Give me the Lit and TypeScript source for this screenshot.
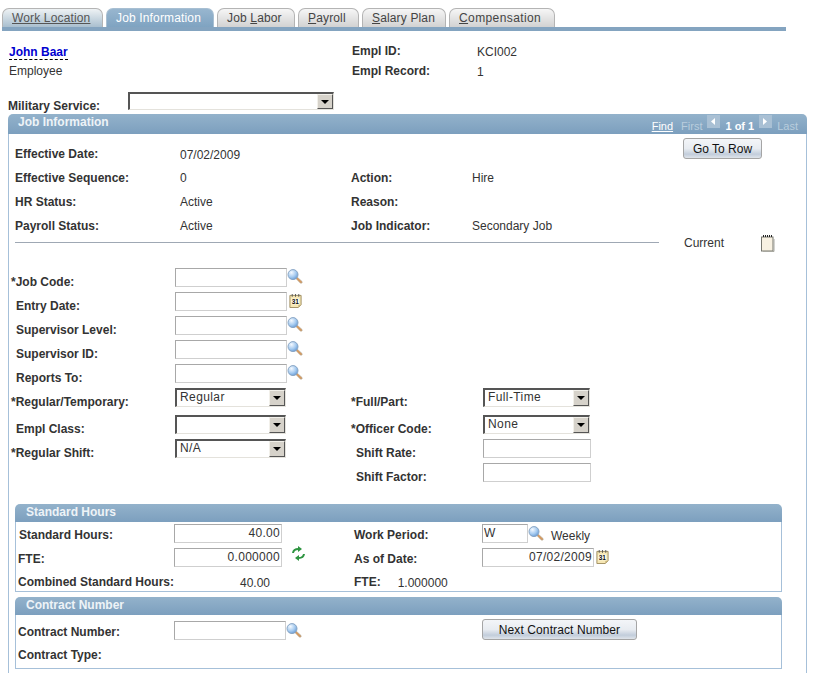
import { LitElement, css, html, svg } from 'lit';
import { customElement } from 'lit/decorators.js';

const lookupIcon = html`<svg class="ico look" width="16" height="16" viewBox="0 0 16 16">
  <defs><radialGradient id="lens" cx="0.35" cy="0.3" r="0.8"><stop offset="0" stop-color="#f4f9ff"/><stop offset="0.55" stop-color="#a6cbf0"/><stop offset="1" stop-color="#5c92d0"/></radialGradient></defs>
  <path d="M8.600 9.200 L10 7.900 L15 12.400 Q15.600 13.200 14.800 14 Q14 14.600 13.200 13.900 Z" fill="#d9985a" stroke="#a9a9a0" stroke-width=".6"/>
  <circle cx="6" cy="5.600" r="5" fill="url(#lens)" stroke="#8aa6c4" stroke-width="1"/>
</svg>`;

const calendarIcon = html`<svg class="ico" width="13" height="14" viewBox="0 0 13 15">
  <path d="M.5 1.500H12.500V11.500L9.500 14.500H.5Z" fill="#f6e7b4" stroke="#9c8a5c"/>
  <path d="M12.500 11.500L9.500 14.500V11.500Z" fill="#c9b47c"/>
  <path d="M3 0V3M6.500 0V3M10 0V3" stroke="#555" stroke-width="1"/>
  <rect x="2" y="5" width="8.500" height="6" fill="#fffdf0"/>
  <text x="6.300" y="10.800" text-anchor="middle" font-size="7" font-weight="700" font-family="Liberation Sans, sans-serif" fill="#111">31</text>
</svg>`;

const noteIcon = html`<svg width="14" height="17" viewBox="0 0 14 17">
  <rect x=".5" y="2" width="11.500" height="14" fill="#f8f1e2" stroke="#77776f"/>
  <path d="M13 4V16.500H2" fill="none" stroke="#a8a8a0"/>
  <path d="M2 1H11" stroke="#222" stroke-width="2" stroke-dasharray="1 1"/>
</svg>`;

const refreshIcon = html`<svg width="15" height="15" viewBox="0 0 15 15" fill="none" stroke="#2d9440" stroke-width="2">
  <path d="M2 7Q2.500 3 7.500 3"/><path d="M7 0L11 3L7 6Z" fill="#2d9440" stroke="none"/>
  <path d="M13 8Q12.500 12 7.500 12"/><path d="M8 15L4 12L8 9Z" fill="#2d9440" stroke="none"/>
</svg>`;

const arrowLeft = svg`<path d="M8 3V10L4 6.500Z" fill="#fff"/>`;
const arrowRight = svg`<path d="M4 3V10L8 6.500Z" fill="#fff"/>`;

const tabs = [
  { pre: '', key: '', post: 'Work Location', cls: 'visited', width: 101 },
  { pre: '', key: '', post: 'Job Information', cls: 'active', width: 108 },
  { pre: 'Job ', key: 'L', post: 'abor', cls: '', width: 78 },
  { pre: '', key: 'P', post: 'ayroll', cls: '', width: 61 },
  { pre: '', key: 'S', post: 'alary Plan', cls: '', width: 84 },
  { pre: '', key: 'C', post: 'ompensation', cls: 'comp', width: 106 },
];

@customElement('app-root')
export class AppRoot extends LitElement {
  static styles = css`
    :host {
      display: block;
      width: 826px;
      height: 673px;
      overflow: hidden;
      background: #fff;
      color: #333;
      font: 12px/14px 'Liberation Sans', Arial, sans-serif;
    }
    * { box-sizing: border-box; }

    .tabs {
      display: flex;
      gap: 3px;
      width: 784px;
      height: 23px;
      margin: 8px 0 0 2px;
      border-bottom: 4px solid #84a4c0;
    }
    .tab {
      height: 19px;
      padding: 2px 0 0 9px;
      border: 1px solid #b4b4b4;
      border-bottom: 0;
      border-radius: 7px 7px 0 0;
      background: linear-gradient(#f6f6f6, #d2d2d2);
      color: #444;
      letter-spacing: 0.15px;
      white-space: nowrap;
    }
    .tab u { text-decoration: underline; }
    .tab.visited {
      background: linear-gradient(#eef2f4, #a9bfcf);
      color: #555;
      text-decoration: underline;
    }
    .tab.active {
      border-color: #a8bfd2;
      background: linear-gradient(#98b6cf, #7fa3c1);
      color: #fff;
    }
    .tab.comp { letter-spacing: 0.4px; }

    .who {
      display: grid;
      grid-template-columns: 343px 125px 1fr;
      grid-auto-rows: 20px;
      margin: 11px 0 0 9px;
      align-items: center;
    }
    .who .name {
      justify-self: start;
      color: #0000d0;
      font-weight: 700;
      border-bottom: 1px dashed #000;
    }
    .who b, .who .emp { padding-bottom: 2px; }
    .military { display: flex; height: 22px; margin: 10px 0 0 8px; }
    .military b { width: 120px; padding-top: 7px; }

    b { font-weight: 700; color: #333; white-space: nowrap; }

    .panel { width: 799px; margin-left: 8px; }
    .panel-head {
      display: flex;
      align-items: center;
      justify-content: space-between;
      height: 20px;
      padding: 0 9px 0 10px;
      border-radius: 5px 5px 0 0;
      background: linear-gradient(#93b2cb, #7c9fbe);
      color: #fff;
      font-weight: 700;
    }
    .panel-head .title { margin-top: -4px; color: #eef3f7; }
    .nav {
      display: flex;
      align-items: center;
      gap: 5px;
      padding-top: 4px;
      font-size: 11px;
      font-weight: 400;
      color: #b9cddd;
    }
    .nav .find { color: #fff; text-decoration: underline; margin-right: 3px; }
    .nav .count { color: #fff; font-weight: 700; }
    .nav svg { display: block; align-self: flex-start; margin-top: -4px; }
    .panel-body {
      position: relative;
      height: 540px;
      padding-top: 8px;
      border: 1px solid #a6c0d9;
      border-width: 0 1px;
    }

    .info {
      display: grid;
      grid-template-columns: 165px 171px 121px 1fr;
      height: 24px;
      padding-left: 6px;
      align-items: center;
    }
    .lower { padding-top: 2px; }
    .goto { position: absolute; top: 4px; left: 674px; }
    .btn {
      display: block;
      height: 21px;
      padding: 0;
      border: 1px solid #a5a5a5;
      border-radius: 3px;
      background: linear-gradient(#f3f5f8 0%, #e8ecf1 50%, #c2cddb 80%, #dfe4ea 100%);
      color: #111;
      font: 12px 'Liberation Sans', Arial, sans-serif;
      text-align: center;
    }
    .btn.go { width: 79px; }
    .btn.next { width: 155px; margin-top: -2px; letter-spacing: 0.1px; }

    .rule-row { display: flex; height: 18px; padding-left: 6px; }
    .rule { width: 644px; height: 1px; margin-top: 4px; background: #9fa8b4; }
    .current { margin: -2px 0 0 25px; width: 77px; }
    .rule-row svg { flex: none; margin-top: -3px; }

    .form { margin-top: 12px; }
    .row {
      display: grid;
      grid-template-columns: 164px 176px 132px 1fr;
      height: 24px;
      padding-left: 2px;
    }
    .row.tall { height: 27px; }
    .row b { padding-top: 7px; }
    .in1 { padding-left: 5px; }
    .cell { display: flex; align-items: flex-start; }

    input {
      display: block;
      height: 19px;
      padding: 0 1px 1px;
      border: 1px solid;
      border-color: #a8a8a8 #cfcfcf #cfcfcf #a8a8a8;
      background: #fff;
      color: #333;
      font: 12px 'Liberation Sans', Arial, sans-serif;
      letter-spacing: 0.3px;
      outline: 0;
    }
    input.r { text-align: right; }
    .w112 { width: 112px; }
    .w108 { width: 108px; }
    .w46 { width: 46px; }
    .ico { display: block; flex: none; }
    .look { margin-top: 1px; }
    .cal { margin: 2px 0 0 2px; }
    .cal2 { margin: 2px 0 0 2px; }

    .sel {
      display: flex;
      justify-content: space-between;
      width: 111px;
      height: 19px;
      padding-left: 3px;
      border: solid;
      border-width: 2px 1px 1px 2px;
      border-color: #555 #e4e2dc #e4e2dc #555;
      background: #fff;
      color: #333;
      letter-spacing: 0.4px;
      line-height: 15px;
    }
    .sel.wide { width: 206px; height: 18px; }
    .sel.mid { width: 107px; }
    .sel i {
      display: flex;
      align-items: center;
      justify-content: center;
      width: 16px;
      height: 16px;
      border: 1px solid;
      border-color: #f2f0ea #555 #555 #f2f0ea;
      background: #d6d2ca;
    }
    .sel.wide i { height: 15px; }
    .sel i::after {
      content: '';
      border: 4px solid transparent;
      border-top: 4px solid #000;
      border-bottom: 0;
    }

    .sub { width: 767px; margin-left: 6px; }
    .sub-head {
      height: 18px;
      padding: 1px 0 0 11px;
      border-radius: 5px 5px 0 0;
      background: linear-gradient(#93b2cb, #7c9fbe);
      color: #eef3f7;
      font-weight: 700;
    }
    .sub-body { border: 1px solid #a6c0d9; border-top: 0; }
    .s1 { margin-top: 17px; }
    .s1 .sub-body { height: 70px; padding-top: 2px; }
    .s2 { margin-top: 5px; }
    .s2 .sub-body { height: 54px; padding-top: 6px; }
    .srow {
      display: grid;
      grid-template-columns: 156px 180px 128px 1fr;
      height: 24px;
      padding-left: 2px;
    }
    .srow b { padding-top: 4px; }
    .srow .look { margin-top: 2px; }
    .srow.plain { align-items: start; }
    .srow.plain b { padding-top: 3px; }
    .srow.plain span { padding-top: 4px; }
    .hours { padding-left: 1px; }
    .weekly { margin: 5px 0 0 7px; }
    .spin { margin: -2px 0 0 9px; }
    .val40 { padding-left: 66px; }
    .fte { display: flex; gap: 17px; }
  `;

  protected render() {
    return html`
      <div class="tabs">
        ${tabs.map(
          (t) => html`<div class="tab ${t.cls}" style="width:${t.width}px">${t.pre}${t.key ? html`<u>${t.key}</u>` : ''}${t.post}</div>`
        )}
      </div>

      <div class="who">
        <span class="name">John Baar</span><b>Empl ID:</b><span>KCI002</span>
        <span class="emp">Employee</span><b>Empl Record:</b><span>1</span>
      </div>

      <div class="military">
        <b>Military Service:</b>
        <div class="sel wide"><span></span><i></i></div>
      </div>

      <div class="panel">
        <div class="panel-head">
          <span class="title">Job Information</span>
          <span class="nav">
            <span class="find">Find</span><span>First</span>
            <svg width="13" height="13" viewBox="0 0 13 13"><rect width="13" height="13" fill="#a9c0d4"/>${arrowLeft}</svg>
            <span class="count">1 of 1</span>
            <svg width="13" height="13" viewBox="0 0 13 13"><rect width="13" height="13" fill="#a9c0d4"/>${arrowRight}</svg>
            <span>Last</span>
          </span>
        </div>
        <div class="panel-body">
          <div class="goto"><button class="btn go">Go To Row</button></div>
          <div class="info"><b>Effective Date:</b><span class="lower">07/02/2009</span></div>
          <div class="info"><b>Effective Sequence:</b><span>0</span><b>Action:</b><span>Hire</span></div>
          <div class="info"><b>HR Status:</b><span>Active</span><b>Reason:</b><span></span></div>
          <div class="info"><b>Payroll Status:</b><span>Active</span><b>Job Indicator:</b><span>Secondary Job</span></div>
          <div class="rule-row">
            <div class="rule"></div>
            <span class="current">Current</span>
            ${noteIcon}
          </div>

          <div class="form">
            <div class="row"><b>*Job Code:</b><div class="cell"><input class="w112" />${lookupIcon}</div></div>
            <div class="row"><b class="in1">Entry Date:</b><div class="cell"><input class="w112" /><span class="cal">${calendarIcon}</span></div></div>
            <div class="row"><b class="in1">Supervisor Level:</b><div class="cell"><input class="w112" />${lookupIcon}</div></div>
            <div class="row"><b class="in1">Supervisor ID:</b><div class="cell"><input class="w112" />${lookupIcon}</div></div>
            <div class="row"><b class="in1">Reports To:</b><div class="cell"><input class="w112" />${lookupIcon}</div></div>
            <div class="row tall">
              <b>*Regular/Temporary:</b>
              <div class="cell"><div class="sel"><span>Regular</span><i></i></div></div>
              <b>*Full/Part:</b>
              <div class="cell"><div class="sel mid"><span>Full-Time</span><i></i></div></div>
            </div>
            <div class="row">
              <b class="in1">Empl Class:</b>
              <div class="cell"><div class="sel"><span></span><i></i></div></div>
              <b>*Officer Code:</b>
              <div class="cell"><div class="sel mid"><span>None</span><i></i></div></div>
            </div>
            <div class="row">
              <b>*Regular Shift:</b>
              <div class="cell"><div class="sel"><span>N/A</span><i></i></div></div>
              <b class="in1">Shift Rate:</b>
              <div class="cell"><input class="w108" /></div>
            </div>
            <div class="row">
              <span></span><span></span>
              <b class="in1">Shift Factor:</b>
              <div class="cell"><input class="w108" /></div>
            </div>
          </div>

          <div class="sub s1">
            <div class="sub-head">Standard Hours</div>
            <div class="sub-body">
              <div class="srow">
                <b class="hours">Standard Hours:</b>
                <div class="cell"><input class="w108 r" value="40.00" /></div>
                <b>Work Period:</b>
                <div class="cell"><input class="w46" value="W" />${lookupIcon}<span class="weekly">Weekly</span></div>
              </div>
              <div class="srow">
                <b>FTE:</b>
                <div class="cell"><input class="w108 r" value="0.000000" /><span class="spin">${refreshIcon}</span></div>
                <b>As of Date:</b>
                <div class="cell"><input class="w112 r" value="07/02/2009" /><span class="cal2">${calendarIcon}</span></div>
              </div>
              <div class="srow plain">
                <b>Combined Standard Hours:</b>
                <span class="val40">40.00</span>
                <div class="fte"><b>FTE:</b><span>1.000000</span></div>
              </div>
            </div>
          </div>

          <div class="sub s2">
            <div class="sub-head">Contract Number</div>
            <div class="sub-body">
              <div class="srow">
                <b>Contract Number:</b>
                <div class="cell"><input class="w112" />${lookupIcon}</div>
                <span></span>
                <div class="cell"><button class="btn next">Next Contract Number</button></div>
              </div>
              <div class="srow plain"><b>Contract Type:</b></div>
            </div>
          </div>
        </div>
      </div>
    `;
  }
}
